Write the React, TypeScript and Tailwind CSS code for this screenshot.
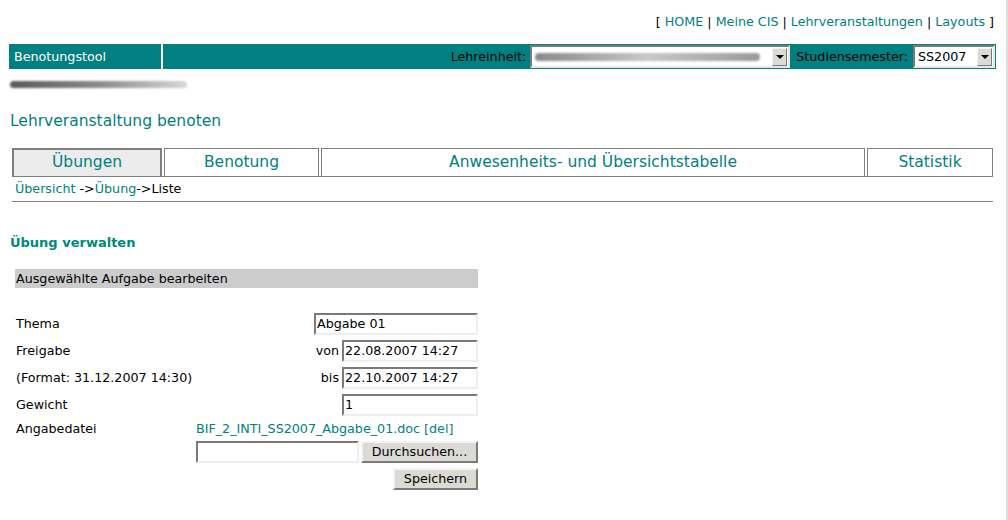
import React from "react";

const teal = "text-[#008080]";

function InsetBox({ className, children }: { className?: string; children?: React.ReactNode }) {
  return (
    <div
      className={`h-[22px] bg-white border-2 border-t-[#7a7a7a] border-l-[#7a7a7a] border-b-[#eeeeee] border-r-[#eeeeee] flex items-center pl-[1px] ${className ?? ""}`}
    >
      {children}
    </div>
  );
}

function OldButton({ label, className }: { label: string; className?: string }) {
  return (
    <div
      className={`h-[22px] bg-[#dcdad5] border-2 border-t-[#f4f4f4] border-l-[#f4f4f4] border-b-[#7a7a7a] border-r-[#7a7a7a] flex items-center justify-center ${className ?? ""}`}
    >
      {label}
    </div>
  );
}

function SelectBox({ className, children }: { className?: string; children?: React.ReactNode }) {
  return (
    <div
      className={`h-[23px] bg-white border-2 border-t-[#7a7a7a] border-l-[#7a7a7a] border-b-[#e8e8e8] border-r-[#e8e8e8] flex items-center pl-[3px] pr-[1px] ${className ?? ""}`}
    >
      <div className="flex-1 whitespace-nowrap">{children}</div>
      <div className="w-[15px] h-[18px] bg-[#dcdad5] border border-t-[#f4f4f4] border-l-[#f4f4f4] border-b-[#7a7a7a] border-r-[#7a7a7a] flex items-center justify-center">
        <div className="w-0 h-0 border-l-[4px] border-r-[4px] border-t-[4px] border-l-transparent border-r-transparent border-t-black" />
      </div>
    </div>
  );
}

function Tab({ label, active, className }: { label: string; active?: boolean; className?: string }) {
  return (
    <div
      className={`h-[28px] flex items-center justify-center text-[15.5px] ${teal} ${
        active ? "bg-[#ececec] border-2 border-[#808080] border-b-0" : "bg-white border border-[#808080] border-b-0"
      } ${className ?? ""}`}
    >
      {label}
    </div>
  );
}

export default function App() {
  return (
    <div
      className="w-[1008px] h-[520px] bg-white text-black text-[12.7px] border-r-2 border-[#dedede] overflow-hidden"
      style={{ fontFamily: '"DejaVu Sans", "Liberation Sans", sans-serif' }}
    >
      {/* Top links */}
      <div className="h-[44px] flex items-center justify-end pr-[12px]">
        <span>
          [ <span className={teal}>HOME</span> | <span className={teal}>Meine CIS</span> |{" "}
          <span className={teal}>Lehrveranstaltungen</span> | <span className={teal}>Layouts</span> ]
        </span>
      </div>

      {/* Teal header bar */}
      <div className="ml-[9px] w-[987px] h-[25px] flex gap-[2px]">
        <div className="w-[152px] bg-[#008080] text-white flex items-center pl-[5px]">Benotungstool</div>
        <div className="flex-1 bg-[#008080] flex items-center justify-end pr-[1px]">
          <span className="mr-[4px]">Lehreinheit:</span>
          <SelectBox className="w-[260px]">
            <div className="h-[8px] w-[225px] rounded-full bg-gradient-to-r from-[#8a8a8a] via-[#c8c8c8] to-[#9a9a9a] blur-[1px]" />
          </SelectBox>
          <span className="ml-[6px] mr-[5px]">Studiensemester:</span>
          <SelectBox className="w-[82px]">SS2007</SelectBox>
        </div>
      </div>

      {/* blurred name */}
      <div className="ml-[10px] mt-[9px] h-[12px] flex items-center">
        <div className="h-[7px] w-[177px] rounded-sm bg-gradient-to-r from-[#5a5a5a] via-[#8a8a8a] to-[#d8d8d8] blur-[1px]" />
      </div>

      {/* Heading */}
      <div className={`ml-[10px] mt-[21px] h-[22px] flex items-center text-[15.5px] ${teal}`}>
        Lehrveranstaltung benoten
      </div>

      {/* Tabs */}
      <div className="ml-[12px] w-[981px] mt-[15px]">
        <div className="flex gap-[2px]">
          <Tab label="Übungen" active className="w-[150px]" />
          <Tab label="Benotung" className="w-[155px]" />
          <Tab label="Anwesenheits- und Übersichtstabelle" className="w-[544px]" />
          <Tab label="Statistik" className="flex-1" />
        </div>
        <div className="h-[1px] bg-[#808080]" />
        <div className="h-[24px] flex items-center pl-[3px]">
          <span className={teal}>Übersicht</span>
          <span>&nbsp;-&gt;</span>
          <span className={teal}>Übung</span>
          <span>-&gt;Liste</span>
        </div>
        <div className="h-[1px] bg-[#808080]" />
      </div>

      {/* Übung verwalten */}
      <div className="ml-[10px] mt-[33px] h-[16px] flex items-center font-bold text-[13px] text-[#00897b]">
        Übung verwalten
      </div>

      <div className="ml-[15px] w-[463px] mt-[18px]">
        <div className="h-[19px] bg-[#cccccc] flex items-center pl-[1px]">Ausgewählte Aufgabe bearbeiten</div>

        <div className="mt-[25px] flex flex-col gap-[5px] pl-[1px]">
          <div className="flex items-center justify-between">
            <span>Thema</span>
            <InsetBox className="w-[164px]">Abgabe 01</InsetBox>
          </div>
          <div className="flex items-center justify-between">
            <span>Freigabe</span>
            <div className="flex items-center">
              <span className="mr-[3px]">von</span>
              <InsetBox className="w-[136px]">22.08.2007 14:27</InsetBox>
            </div>
          </div>
          <div className="flex items-center justify-between">
            <span>(Format: 31.12.2007 14:30)</span>
            <div className="flex items-center">
              <span className="mr-[3px]">bis</span>
              <InsetBox className="w-[136px]">22.10.2007 14:27</InsetBox>
            </div>
          </div>
          <div className="flex items-center justify-between">
            <span>Gewicht</span>
            <InsetBox className="w-[136px]">1</InsetBox>
          </div>
          <div className="flex items-start -mt-[2px]">
            <span className="w-[180px]">Angabedatei</span>
            <div className="flex flex-col items-end">
              <span className={`${teal} h-[22px] self-start`}>BIF_2_INTI_SS2007_Abgabe_01.doc [del]</span>
              <div className="flex gap-[2px]">
                <InsetBox className="w-[163px]" />
                <OldButton label="Durchsuchen..." className="w-[117px]" />
              </div>
              <OldButton label="Speichern" className="w-[85px] mt-[5px]" />
            </div>
          </div>
        </div>
      </div>
    </div>
  );
}
